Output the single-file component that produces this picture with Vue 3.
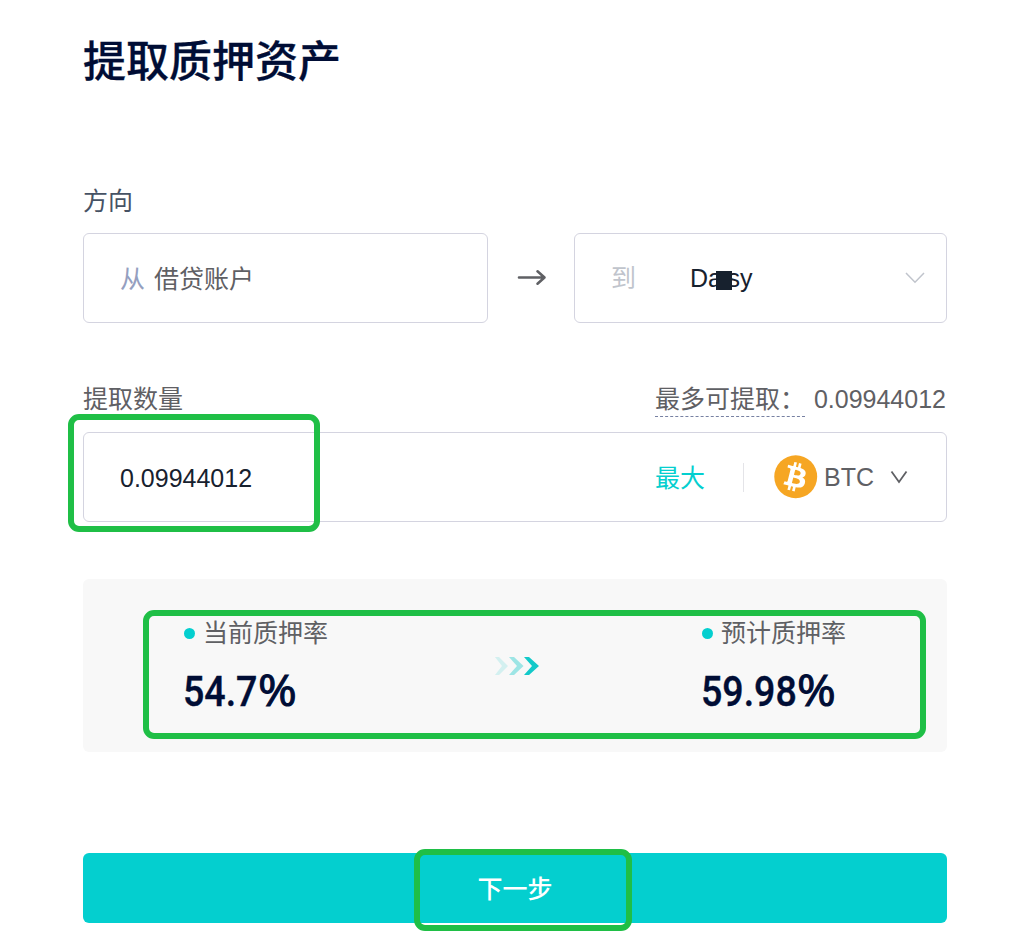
<template>
  <main class="page">
    <h1 class="title">提取质押资产</h1>

    <div class="label direction-label">方向</div>
    <div class="direction">
      <div class="box from">
        <span class="from-prefix">从</span>
        <span>{{ fromAccount }}</span>
      </div>
      <div class="arrow">
        <svg width="30" height="18" viewBox="0 0 30 18">
          <path d="M2 8.5H27.5M20.5 2.3L27.5 8.5L20.5 14.7" />
        </svg>
      </div>
      <div class="box to">
        <span class="to-prefix">到</span>
        <span class="to-name">Da<span class="masked">i</span>sy<i class="mask"></i></span>
        <svg class="to-chevron" width="20" height="12" viewBox="0 0 20 12">
          <path d="M1 1L10 10.2L19 1" />
        </svg>
      </div>
    </div>

    <div class="amount-head">
      <span>提取数量</span>
      <div class="available">
        <span class="available-label">最多可提取：</span>
        <span>{{ amount }}</span>
      </div>
    </div>
    <div class="box amount">
      <span class="amount-value">{{ amount }}</span>
      <span class="max">最大</span>
      <span class="divider"></span>
      <svg class="coin" width="44" height="44" viewBox="0 0 32 32">
        <circle cx="15.8" cy="15.8" r="15.6" />
        <path
          transform="translate(15.8 15.8) scale(1.08) translate(-16.5 -16)"
          d="M23.189 14.02c.314-2.096-1.283-3.223-3.465-3.975l.708-2.84-1.728-.43-.69 2.765c-.454-.114-.92-.22-1.385-.326l.695-2.783L15.596 6l-.708 2.839c-.376-.086-.746-.17-1.104-.26l.002-.009-2.384-.595-.46 1.846s1.283.294 1.256.312c.7.175.826.638.805 1.006l-.806 3.235c.048.012.11.03.18.057l-.183-.045-1.13 4.532c-.086.212-.303.531-.793.41.018.025-1.256-.313-1.256-.313l-.858 1.978 2.25.561c.418.105.828.215 1.231.318l-.715 2.872 1.727.43.708-2.84c.472.127.93.245 1.378.357l-.706 2.828 1.728.43.715-2.866c2.948.558 5.164.333 6.097-2.333.752-2.146-.037-3.385-1.588-4.192 1.13-.26 1.98-1.003 2.207-2.538zm-3.95 5.538c-.533 2.147-4.148.986-5.32.695l.95-3.805c1.172.293 4.929.872 4.37 3.11zm.535-5.569c-.487 1.953-3.495.96-4.47.717l.86-3.45c.975.243 4.118.696 3.61 2.733z"
        />
      </svg>
      <span class="currency">BTC</span>
      <svg class="currency-chevron" width="18" height="14" viewBox="0 0 18 14">
        <path d="M1.5 1.5L9 12L16.5 1.5" />
      </svg>
      <span class="ring amount-ring"></span>
    </div>

    <section class="rates">
      <div v-for="rate in rates" :key="rate.name" class="rate">
        <div class="rate-name"><i class="dot"></i>{{ rate.name }}</div>
        <div class="rate-value">
          <span class="digits" :style="{ width: rate.width + 'px' }">{{ rate.value }}</span>
          <span class="percent">%</span>
        </div>
      </div>
      <svg class="rate-arrows" width="48" height="22" viewBox="0 0 48 22">
        <path class="faint" d="M2 2H6L15 11L6 20H2L9 11Z" />
        <path class="half" d="M16 2H21L30.5 11L21 20H16L24 11Z" />
        <path d="M31 2H36L46 11L36 20H31L39 11Z" />
      </svg>
      <span class="ring rates-ring"></span>
    </section>

    <button class="next">
      下一步
      <span class="ring next-ring"></span>
    </button>
  </main>
</template>

<script setup>
import { ref } from "vue";

const fromAccount = ref("借贷账户");
const amount = ref("0.09944012");
// width: room for the narrowed digits, the percent sign follows it
const rates = [
  { name: "当前质押率", value: "54.7", width: 75 },
  { name: "预计质押率", value: "59.98", width: 96 },
];
</script>

<style>
body {
  background: #fff;
  overflow: hidden;
}
</style>

<style scoped>
.page {
  box-sizing: border-box;
  height: 950px;
  padding: 27px 71px 0 83px;
  font-family: "Liberation Sans", "Noto Sans CJK SC", sans-serif;
  font-size: 25px;
  line-height: 36px;
  color: #5f6064;
}

.title {
  margin: 0;
  font-family: "Noto Sans CJK SC", sans-serif;
  font-size: 43px;
  font-weight: 500;
  line-height: 62px;
  color: #000d35;
  -webkit-text-stroke: 0.3px #000d35;
}

.label {
  color: #465264;
}

.direction-label {
  margin-top: 94px;
}

.box {
  box-sizing: border-box;
  display: flex;
  align-items: center;
  height: 90px;
  border: 1px solid #d4d4e0;
  border-radius: 6px;
}

.direction {
  display: flex;
  margin-top: 14px;
}

.from {
  width: 405px;
  padding: 2px 0 0 36px;
}

.from-prefix {
  margin-right: 9px;
  color: #959fc0;
}

.arrow {
  display: flex;
  flex: 1;
  align-items: center;
  justify-content: center;
  padding-left: 1px;
}

svg {
  flex: none;
  fill: none;
}

.arrow path {
  stroke: #5f6064;
  stroke-width: 2.6;
  stroke-linecap: round;
  stroke-linejoin: round;
}

.to {
  width: 373px;
  padding: 0 21px 0 36px;
}

.to-prefix {
  margin-right: 54px;
  color: #c0c4cc;
}

.to-name {
  position: relative;
  color: #17212e;
}

.masked {
  color: transparent;
}

.mask {
  position: absolute;
  top: 11px;
  left: 26px;
  width: 16px;
  height: 19px;
  background: #17212e;
}

.to-chevron {
  margin-left: auto;
  stroke: #c0c4cc;
  stroke-width: 1.5;
}

.amount-head {
  display: flex;
  justify-content: space-between;
  height: 36px;
  margin-top: 58px;
}

.available {
  display: flex;
  gap: 9px;
  margin-right: 1px;
}

.available-label {
  box-sizing: border-box;
  height: 36px;
  border-bottom: 1px dashed #7781a2;
}

.amount {
  position: relative;
  margin-top: 15px;
  padding: 0 38px 0 36px;
}

.amount-value {
  padding-top: 2px;
  color: #17212e;
}

.max {
  margin-left: auto;
  padding-top: 2px;
  color: #04cfcf;
}

.divider {
  width: 1px;
  height: 29px;
  margin: 0 30px 0 38px;
  background: #e4e4e8;
}

.coin circle {
  fill: #f6a623;
}

.coin path {
  fill: #fff;
}

.currency {
  margin: 0 16px 0 6px;
}

.currency-chevron {
  stroke: #5f6064;
  stroke-width: 1.8;
}

.rates {
  position: relative;
  box-sizing: border-box;
  display: flex;
  height: 173px;
  margin-top: 57px;
  padding: 36px 0 0 100px;
  background: #f8f8f8;
  border-radius: 6px;
}

.rate {
  width: 518px;
}

.rate:nth-child(2) {
  width: 200px;
}

.rate-name {
  display: flex;
  align-items: center;
  padding-left: 1px;
}

.dot {
  width: 11px;
  height: 11px;
  margin-right: 8px;
  background: #04cfcf;
  border-radius: 50%;
}

.rate-value {
  display: flex;
  align-items: baseline;
  height: 52px;
  margin-top: 13px;
  font-family: Roboto, sans-serif;
  font-size: 43px;
  font-weight: 500;
  line-height: 52px;
  color: #000d35;
}

.digits {
  flex: none;
  white-space: nowrap;
  -webkit-text-stroke: 0.4px #000d35;
  transform: scaleX(0.873);
  transform-origin: left;
}

.percent {
  font-family: "Open Sans", sans-serif;
  font-weight: 500;
  -webkit-text-stroke: 1px #000d35;
  transform: scaleX(1.09);
  transform-origin: left;
}

.rate-arrows {
  position: absolute;
  top: 76px;
  left: 410px;
}

.rate-arrows path {
  fill: #13c9c9;
}

.rate-arrows .half {
  opacity: 0.4;
}

.rate-arrows .faint {
  opacity: 0.16;
}

.next {
  position: relative;
  display: block;
  width: 100%;
  height: 70px;
  margin-top: 101px;
  padding: 2px 0 0;
  border: none;
  border-radius: 6px;
  background: #04cfcf;
  color: #fff;
  font: inherit;
  font-weight: 500;
}

.ring {
  position: absolute;
  box-sizing: border-box;
  border: 6px solid #1fbf46;
  border-radius: 11px;
}

.amount-ring {
  top: -19px;
  left: -16px;
  width: 252px;
  height: 118px;
}

.rates-ring {
  top: 31px;
  left: 60px;
  width: 783px;
  height: 129px;
}

.next-ring {
  top: -4px;
  left: 331px;
  width: 218px;
  height: 82px;
}
</style>
